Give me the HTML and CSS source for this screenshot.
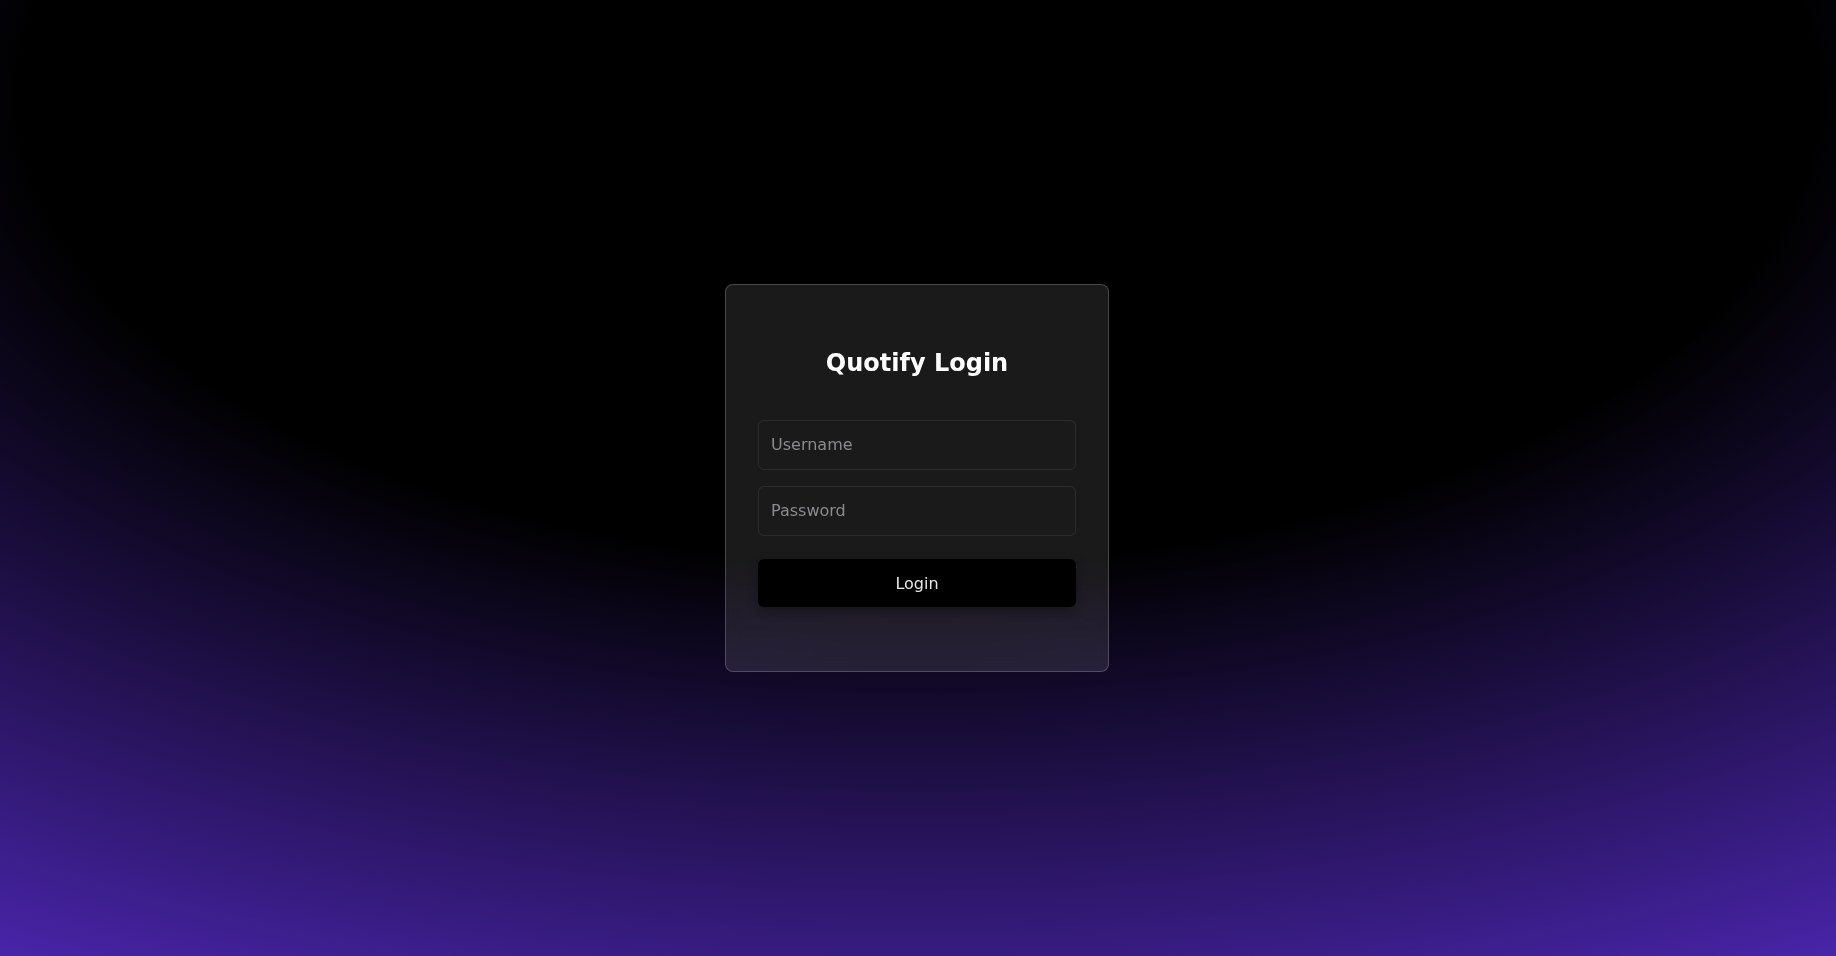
FILE: index.html
```html
<!DOCTYPE html>
<html lang="en">
<head>
<meta charset="utf-8">
<title>Quotify Login</title>
<link rel="stylesheet" href="styles.css">
</head>
<body>
<main class="page">
  <section class="card">
    <h2 class="title">Quotify Login</h2>
    <form class="form">
      <input class="field" type="text" placeholder="Username">
      <input class="field" type="password" placeholder="Password">
      <button class="btn" type="button">Login</button>
    </form>
  </section>
</main>
</body>
</html>
```

FILE: styles.css
```css
* { box-sizing: border-box; }
html, body { margin: 0; height: 100%; }
body {
  font-family: "DejaVu Sans", sans-serif;
  background: radial-gradient(125% 125% at 50% 10%, #000 39%, #63e 100%);
  background-color: #000;
}
.page {
  min-height: 100vh;
  display: flex;
  align-items: center;
  justify-content: center;
}
.card {
  width: 384px;
  margin-right: 2px;
  padding: 64px 32px 64px;
  border: 1px solid rgba(255, 255, 255, 0.2);
  border-radius: 8px;
  background: rgba(255, 255, 255, 0.1);
  backdrop-filter: blur(10px);
}
.title {
  margin: 0 0 43px;
  font-size: 24px;
  line-height: 28px;
  font-weight: bold;
  color: #fff;
  text-align: center;
}
.form {
  display: flex;
  flex-direction: column;
  gap: 16px;
}
.field {
  height: 50px;
  padding: 0 12px 1px;
  border: 1px solid rgba(255, 255, 255, 0.08);
  border-radius: 6px;
  background: transparent;
  color: #fff;
  font-family: "DejaVu Sans", sans-serif;
  font-size: 16px;
  outline: none;
}
.field::placeholder { color: #8b8b8f; }
.btn {
  margin-top: 7px;
  height: 48px;
  border: none;
  border-radius: 6px;
  background: #000;
  color: #e6e6e6;
  font-family: "DejaVu Sans", sans-serif;
  font-size: 16px;
  box-shadow: 0 4px 12px rgba(0, 0, 0, 0.3);
  cursor: pointer;
}
```
